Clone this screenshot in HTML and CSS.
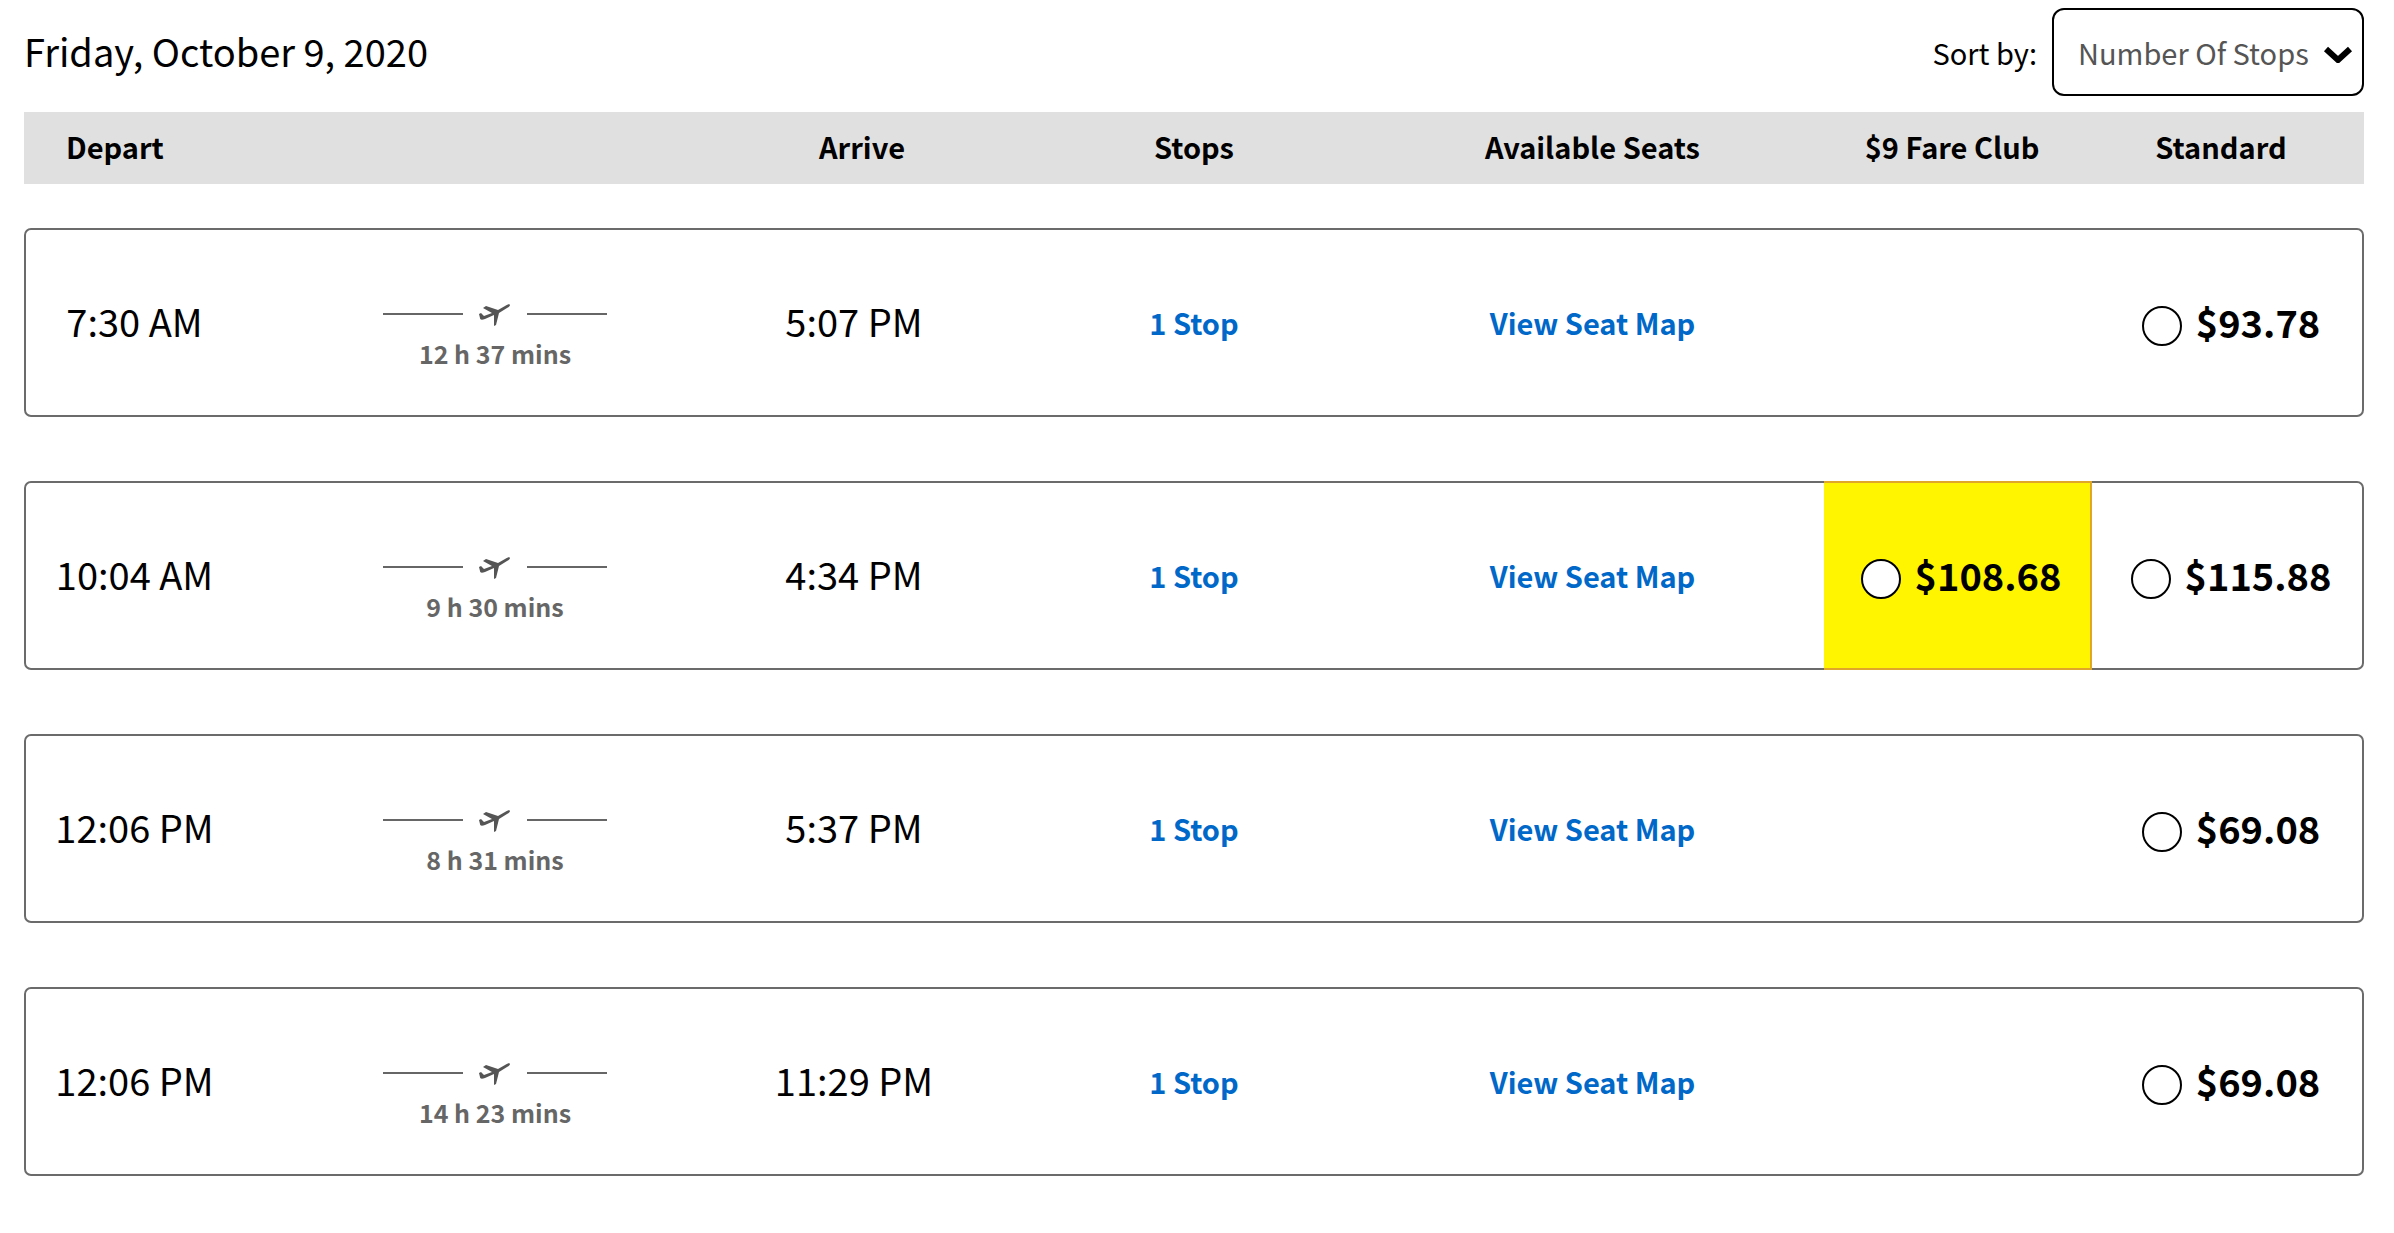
FILE: index.html
```html
<!DOCTYPE html>
<html lang="en">
<head>
    <meta charset="UTF-8">
    <meta name="viewport" content="width=device-width, initial-scale=1.0">
    <title>Select Flights</title>
    <link rel="stylesheet" href="styles.css">
</head>
<body>
    <svg class="sprite" aria-hidden="true">
        <symbol id="plane" viewBox="0 0 32 24">
            <path d="M0 12l2-1 3 3 8-3L4 6l3-2 12 4 7-4c3-2 5-2 5-1s-1 2-3 3l-8 5-3 12-2 1 0-11-9 4c-3 1-5 1-5-1z"/>
        </symbol>
    </svg>

    <div class="topbar">
        <h1 class="date">Friday, October 9, 2020</h1>
        <div class="sort">
            <label for="sort">Sort by:</label>
            <div class="select">
                <select id="sort">
                    <option>Number Of Stops</option>
                    <option>Price</option>
                    <option>Departure</option>
                </select>
                <svg class="chevron" viewBox="0 0 30 18"><path d="M3 4l12 11L27 4"/></svg>
            </div>
        </div>
    </div>

    <table class="flights">
        <thead>
            <tr>
                <th class="depart">Depart</th>
                <th class="duration"></th>
                <th class="arrive">Arrive</th>
                <th class="stops">Stops</th>
                <th class="seats">Available Seats</th>
                <th class="fare">$9 Fare Club</th>
                <th class="fare">Standard</th>
            </tr>
        </thead>
        <tbody>
            <tr>
                <td class="time">7:30 AM</td>
                <td class="duration">
                    <div class="route"><svg class="plane"><use href="#plane"/></svg></div>
                    <div class="mins">12 h 37 mins</div>
                </td>
                <td class="time">5:07 PM</td>
                <td class="stops"><a href="#">1 Stop</a></td>
                <td class="seats"><a href="#">View Seat Map</a></td>
                <td class="fare"></td>
                <td class="fare"><label><input type="radio" name="fare"> <span>$93.78</span></label></td>
            </tr>
            <tr>
                <td class="time">10:04 AM</td>
                <td class="duration">
                    <div class="route"><svg class="plane"><use href="#plane"/></svg></div>
                    <div class="mins">9 h 30 mins</div>
                </td>
                <td class="time">4:34 PM</td>
                <td class="stops"><a href="#">1 Stop</a></td>
                <td class="seats"><a href="#">View Seat Map</a></td>
                <td class="fare club"><label><input type="radio" name="fare"> <span>$108.68</span></label></td>
                <td class="fare"><label><input type="radio" name="fare"> <span>$115.88</span></label></td>
            </tr>
            <tr>
                <td class="time">12:06 PM</td>
                <td class="duration">
                    <div class="route"><svg class="plane"><use href="#plane"/></svg></div>
                    <div class="mins">8 h 31 mins</div>
                </td>
                <td class="time">5:37 PM</td>
                <td class="stops"><a href="#">1 Stop</a></td>
                <td class="seats"><a href="#">View Seat Map</a></td>
                <td class="fare"></td>
                <td class="fare"><label><input type="radio" name="fare"> <span>$69.08</span></label></td>
            </tr>
            <tr>
                <td class="time">12:06 PM</td>
                <td class="duration">
                    <div class="route"><svg class="plane"><use href="#plane"/></svg></div>
                    <div class="mins">14 h 23 mins</div>
                </td>
                <td class="time">11:29 PM</td>
                <td class="stops"><a href="#">1 Stop</a></td>
                <td class="seats"><a href="#">View Seat Map</a></td>
                <td class="fare"></td>
                <td class="fare"><label><input type="radio" name="fare"> <span>$69.08</span></label></td>
            </tr>
        </tbody>
    </table>
</body>
</html>
```

FILE: styles.css
```css
* {
    box-sizing: border-box;
}

body {
    margin: 0;
    padding: 8px 30px 32px 24px;
    font-family: "Noto Sans CJK SC", "Noto Sans", sans-serif;
    font-size: 29px;
    color: #000;
    background-color: #fff;
}

.sprite {
    display: none;
}

.topbar {
    display: flex;
    justify-content: space-between;
    align-items: center;
    margin-bottom: 16px;
}

.date {
    margin: 0;
    padding-bottom: 4px;
    font-size: 38px;
    font-weight: 400;
}

.sort {
    display: flex;
    align-items: center;
    gap: 15px;
}

.select {
    position: relative;
}

.select select {
    appearance: none;
    display: block;
    width: 312px;
    height: 88px;
    padding: 0 48px 0 24px;
    font: inherit;
    color: #555;
    background-color: #fff;
    border: 2px solid #000;
    border-radius: 12px;
}

.chevron {
    position: absolute;
    top: 37px;
    right: 11px;
    width: 30px;
    height: 18px;
    fill: none;
    stroke: #000;
    stroke-width: 6;
    pointer-events: none;
}

/* table */
.flights,
.flights thead,
.flights tbody {
    display: block;
}

.flights tr {
    display: grid;
    grid-template-columns: 217fr 504fr 214fr 466fr 397fr 268fr 270fr;
    border: 2px solid transparent;
}

.flights thead tr {
    min-height: 72px;
    margin-bottom: 44px;
    background-color: #e0e0e0;
}

.flights tbody tr {
    min-height: 189px;
    border-color: #6b6b6b;
    border-radius: 7px;
}

.flights tbody tr + tr {
    margin-top: 64px;
}

.flights th,
.flights td {
    display: flex;
    justify-content: center;
    align-items: center;
    padding: 0 0 4px;
}

.flights th.depart {
    justify-content: flex-start;
    padding-left: 40px;
}

.flights th.arrive {
    padding-left: 16px;
}

.flights th.seats,
.flights td.seats {
    padding-right: 66px;
}

.flights th.fare {
    padding-right: 12px;
}

.flights td.time {
    padding-bottom: 4px;
    font-size: 38px;
}

.flights td.stops,
.flights td.seats {
    padding-bottom: 2px;
}

.flights td.duration {
    flex-direction: column;
    gap: 11px;
    padding: 24px 0 0;
}

/* duration */
.route {
    display: flex;
    align-items: center;
    gap: 16px;
}

.route::before,
.route::after {
    content: "";
    width: 80px;
    height: 2px;
    background-color: #666;
}

.plane {
    width: 32px;
    height: 26px;
    fill: #555;
}

.mins {
    font-size: 25px;
    font-weight: 700;
    line-height: 30px;
    color: #666;
}

.flights a {
    color: #0068c8;
    font-weight: 700;
    text-decoration: none;
}

/* fares */
.flights td.fare {
    padding: 0 0 2px 8px;
}

.flights td.club {
    margin: -2px 0;
    background-color: #fff500;
    border: solid #dfa62a;
    border-width: 2px 2px 2px 0;
}

.fare label {
    display: flex;
    align-items: center;
    gap: 14px;
    font-size: 38px;
    font-weight: 700;
    cursor: pointer;
}

.fare input {
    appearance: none;
    width: 40px;
    height: 40px;
    margin: 8px 0 0;
    background-color: #fff;
    border: 2px solid #000;
    border-radius: 50%;
}

.fare input:checked {
    background-color: #000;
    box-shadow: inset 0 0 0 8px #fff;
}
```
